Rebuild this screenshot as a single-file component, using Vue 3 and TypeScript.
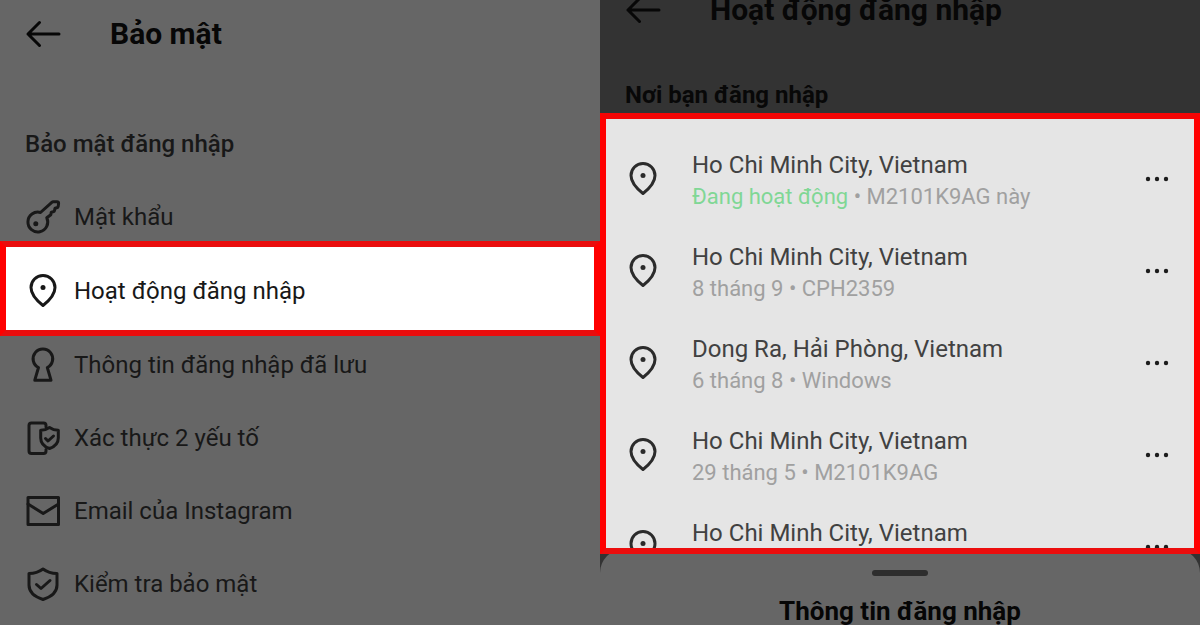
<script setup lang="ts">
type IconName = 'key' | 'pin' | 'keyhole' | 'twofactor' | 'mail' | 'shield'

interface MenuItem {
  icon: IconName
  label: string
  active?: boolean
}

interface Session {
  place: string
  status?: string
  detail: string
}

const icons: Record<IconName, string[]> = {
  key: [
    'M15.5 13.5 26.8 3.3Q27.4 2.800 28.200 2.800H32Q33.700 2.800 33.600 4.300L33.200 7.400Q33 8.600 31.800 8.800L30 9.200 29.500 11.600Q29.300 12.600 28.300 12.700L26.300 13.100 25.800 15.700 21.800 18.800A9.900 9.900 0 1 1 15.500 13.500Z',
  ],
  pin: ['M18 32.500Q6 23 6 14.500A12 12 0 0 1 30 14.500Q30 23 18 32.500Z'],
  keyhole: ['M13.500 20.500A9.800 9.800 0 1 1 22.300 20.500L26 33.200H9.800Z'],
  twofactor: [
    'M21 7V5.500Q21 3 18.500 3H6.500Q4 3 4 5.500V31Q4 33.500 6.500 33.500H18.500Q21 33.500 21 31V29.500',
    'M24.500 7.500Q28.500 10.300 33.300 10.300V18Q33.300 25.500 24.500 28.500Q15.700 25.500 15.700 18V10.300Q20.500 10.300 24.500 7.500Z',
    'M20.500 18.500 23 21 28.500 16',
  ],
  mail: ['M3 4.500H33.500V31.500H3Z', 'M3 11 18.200 20.500 33.500 11'],
  shield: [
    'M18 3Q24 7.500 32 7.500V19Q32 29 18 33.500Q4 29 4 19V7.500Q12 7.500 18 3Z',
    'M11.500 18.500 16 22.500 25 14.500',
  ],
}

const menu: MenuItem[] = [
  { icon: 'key', label: 'Mật khẩu' },
  { icon: 'pin', label: 'Hoạt động đăng nhập', active: true },
  { icon: 'keyhole', label: 'Thông tin đăng nhập đã lưu' },
  { icon: 'twofactor', label: 'Xác thực 2 yếu tố' },
  { icon: 'mail', label: 'Email của Instagram' },
  { icon: 'shield', label: 'Kiểm tra bảo mật' },
]

const sessions: Session[] = [
  { place: 'Ho Chi Minh City, Vietnam', status: 'Đang hoạt động', detail: ' • M2101K9AG này' },
  { place: 'Ho Chi Minh City, Vietnam', detail: '8 tháng 9 • CPH2359' },
  { place: 'Dong Ra, Hải Phòng, Vietnam', detail: '6 tháng 8 • Windows' },
  { place: 'Ho Chi Minh City, Vietnam', detail: '29 tháng 5 • M2101K9AG' },
  { place: 'Ho Chi Minh City, Vietnam', detail: '' },
]
</script>

<template>
  <main class="screens">
    <section class="panel security">
      <header class="bar">
        <button class="back" type="button" aria-label="Quay lại">
          <svg class="icon" viewBox="0 0 36 36"><path d="M34 18H3M14.500 6.500 3 18 14.500 29.500" /></svg>
        </button>
        <h1 class="title">Bảo mật</h1>
      </header>
      <h2 class="section">Bảo mật đăng nhập</h2>
      <nav class="menu">
        <button
          v-for="item in menu"
          :key="item.label"
          type="button"
          class="item"
          :class="{ active: item.active }"
        >
          <svg class="icon" viewBox="0 0 36 36" aria-hidden="true">
            <path v-for="d in icons[item.icon]" :key="d" :d="d" />
            <circle v-if="item.icon === 'pin'" class="dot" cx="18" cy="14.500" r="2.500" />
            <circle v-if="item.icon === 'key'" class="dot" cx="10.800" cy="24.800" r="2.500" />
          </svg>
          <span>{{ item.label }}</span>
        </button>
      </nav>
    </section>

    <section class="panel activity">
      <header class="bar">
        <button class="back" type="button" aria-label="Quay lại">
          <svg class="icon" viewBox="0 0 36 36"><path d="M34 18H3M14.500 6.500 3 18 14.500 29.500" /></svg>
        </button>
        <h1 class="title">Hoạt động đăng nhập</h1>
      </header>
      <h2 class="section">Nơi bạn đăng nhập</h2>
      <ul class="sessions">
        <li v-for="(s, i) in sessions" :key="i" class="session">
          <svg class="icon" viewBox="0 0 36 36" aria-hidden="true">
            <path :d="icons.pin[0]" />
            <circle class="dot" cx="18" cy="14.500" r="2.500" />
          </svg>
          <div class="info">
            <div class="place">{{ s.place }}</div>
            <div class="detail"><span v-if="s.status" class="online">{{ s.status }}</span>{{ s.detail }}</div>
          </div>
          <button class="more" type="button" aria-label="Tùy chọn khác">
            <svg class="dots" viewBox="0 0 24 6">
              <circle cx="3" cy="3" r="2.200" />
              <circle cx="12" cy="3" r="2.200" />
              <circle cx="21" cy="3" r="2.200" />
            </svg>
          </button>
        </li>
      </ul>
      <div class="sheet">
        <div class="handle"></div>
        <h2 class="sheet-title">Thông tin đăng nhập</h2>
      </div>
    </section>
  </main>
</template>

<style>
body {
  margin: 0;
}
</style>

<style scoped>
.screens {
  display: grid;
  grid-template-columns: 1fr 1fr;
  height: 100vh;
  overflow: hidden;
  font-family: Roboto, "Noto Sans", sans-serif;
  font-size: 24px;
  color: #181818;
}

.panel {
  display: flex;
  flex-direction: column;
  min-width: 0;
  overflow: hidden;
}

.security {
  background: #666;
}

.activity {
  background: #333;
}

button {
  border: 0;
  padding: 0;
  background: none;
  color: inherit;
  font: inherit;
  text-align: left;
  cursor: pointer;
}

.bar {
  display: flex;
  flex: none;
  align-items: center;
  gap: 49px;
  height: 68px;
  padding-left: 25px;
  color: #070707;
}

.back {
  display: flex;
}

.icon {
  flex: none;
  width: 36px;
  height: 36px;
  fill: none;
  stroke: currentColor;
  stroke-width: 3;
  stroke-linecap: round;
  stroke-linejoin: round;
}

.icon .dot {
  fill: currentColor;
  stroke: none;
}

.title {
  margin: 0;
  font-size: 30px;
  font-weight: 700;
  line-height: 36px;
  white-space: nowrap;
}

.section {
  flex: none;
  margin: 0;
  padding-left: 25px;
  font-size: 24px;
  line-height: 32px;
}

.security .section {
  margin-top: 60px;
  font-weight: 500;
}

.menu {
  display: flex;
  flex-direction: column;
  margin-top: 20px;
}

.item {
  display: flex;
  flex: none;
  align-items: center;
  gap: 13px;
  height: 73px;
  padding-left: 25px;
  white-space: nowrap;
}

.item.active {
  box-sizing: border-box;
  height: 95px;
  margin: -12px 0 -8px;
  padding: 4px 0 0 19px;
  border: 6px solid;
  border-color: #e90d0d #f00;
  background: #fff;
}

.activity .bar {
  margin-top: -24px;
}

.activity .section {
  margin-top: 35px;
  color: #080808;
  font-weight: 700;
}

.sessions {
  position: relative;
  z-index: 1;
  box-sizing: border-box;
  flex: none;
  height: 441px;
  margin: 2px 0 0;
  padding: 14px 0 0;
  border: 6px solid;
  border-color: #f50505 #f00 #eb0d0d;
  overflow: hidden;
  background: #e5e5e5;
  list-style: none;
}

.session {
  display: flex;
  align-items: center;
  height: 92px;
  padding: 0 25px 0 19px;
  color: #2b2b2b;
}

.info {
  flex: 1;
  min-width: 0;
  height: 64px;
  margin-left: 31px;
  white-space: pre;
}

.place {
  line-height: 36px;
  color: #414141;
}

.detail {
  font-size: 22px;
  line-height: 28px;
  color: #a0a0a0;
}

.online {
  color: #80d795;
}

.more {
  display: flex;
}

.dots {
  width: 24px;
  height: 6px;
  fill: #1c1c1c;
}

.sheet {
  display: flex;
  flex: 1 0 auto;
  flex-direction: column;
  align-items: center;
  margin-top: -5px;
  padding-top: 21px;
  border-radius: 24px 24px 0 0;
  background: #666;
}

.handle {
  width: 56px;
  height: 6px;
  border-radius: 3px;
  background: #2d2d2d;
}

.sheet-title {
  margin: 19px 0 0;
  font-size: 26px;
  font-weight: 700;
  line-height: 32px;
  color: #060606;
}
</style>
